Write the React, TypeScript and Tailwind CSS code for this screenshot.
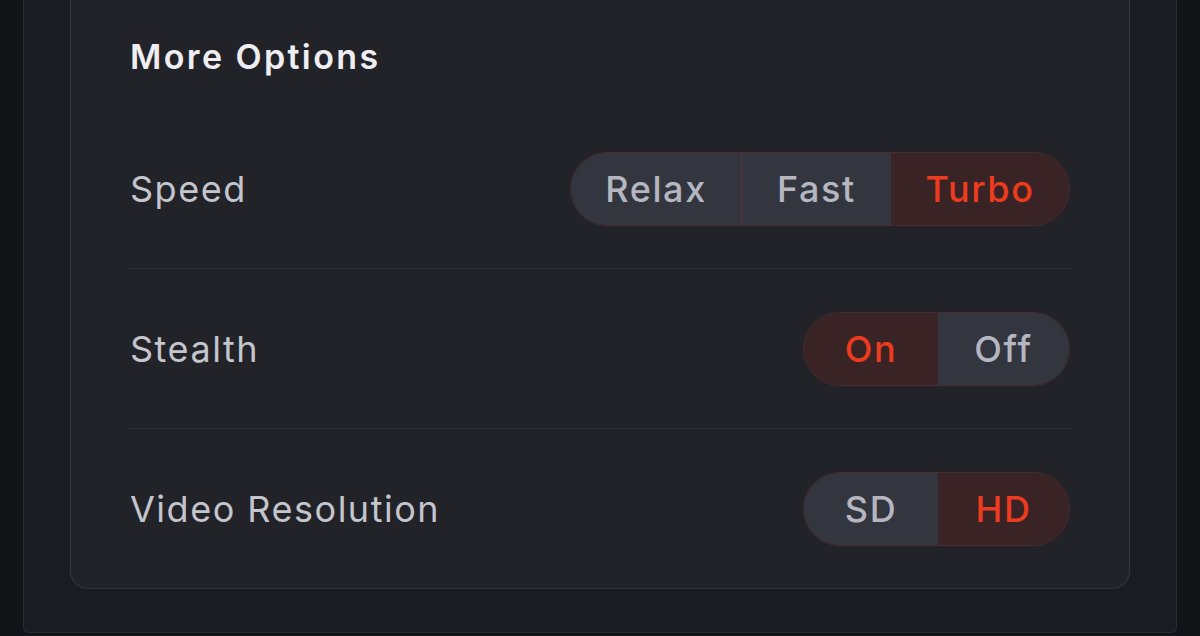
import React from "react";

type Option = { label: string; width: string };

const rows: { title: string; options: Option[]; active: number }[] = [
  {
    title: "Speed",
    options: [
      { label: "Relax", width: "w-[170px]" },
      { label: "Fast", width: "w-[150px]" },
      { label: "Turbo", width: "w-[178px]" },
    ],
    active: 2,
  },
  {
    title: "Stealth",
    options: [
      { label: "On", width: "w-[134px]" },
      { label: "Off", width: "w-[131px]" },
    ],
    active: 0,
  },
  {
    title: "Video Resolution",
    options: [
      { label: "SD", width: "w-[134px]" },
      { label: "HD", width: "w-[131px]" },
    ],
    active: 1,
  },
];

function Segmented({ options, active }: { options: Option[]; active: number }) {
  return (
    <div className="flex h-[74px] rounded-full border border-[#4a2b2e] overflow-hidden">
      {options.map((opt, i) => {
        const selected = i === active;
        const divider = i > 0 && i !== active && i - 1 !== active;
        return (
          <div
            key={opt.label}
            className={[
              opt.width,
              "flex items-center justify-center text-[36px] font-medium tracking-[0.045em]",
              selected ? "bg-[#3a2324] text-[#ec3b1e]" : "bg-[#33353f] text-[#b5b6c0]",
              divider ? "border-l border-[#583236]" : "",
            ].join(" ")}
          >
            {opt.label}
          </div>
        );
      })}
    </div>
  );
}

export default function App() {
  return (
    <div
      className="h-[636px] w-[1200px] overflow-hidden bg-[#131418] px-[23px]"
      style={{ fontFamily: "Inter, 'Noto Sans', sans-serif" }}
    >
      <div className="h-[633px] bg-[#1b1c21] border-x border-b border-[#2a2b31] rounded-b-[6px] px-[46px]">
        {/* Options card */}
        <div className="bg-[#222329] border-x border-b border-[#34353c] rounded-b-[18px] pt-[36px] px-[59px]">
          <h2 className="text-[34px] leading-[42px] font-semibold tracking-[0.07em] text-[#eeeef2] mb-[31px]">
            More Options
          </h2>

          {rows.map((row, i) => (
            <div
              key={row.title}
              className={
                "flex items-center justify-between pt-[43px] pb-[42px] " +
                (i < rows.length - 1 ? "border-b border-[#2e2f35]" : "")
              }
            >
              <span className="text-[36px] tracking-[0.042em] text-[#c4c5cd]">{row.title}</span>
              <Segmented options={row.options} active={row.active} />
            </div>
          ))}
        </div>
      </div>
    </div>
  );
}
